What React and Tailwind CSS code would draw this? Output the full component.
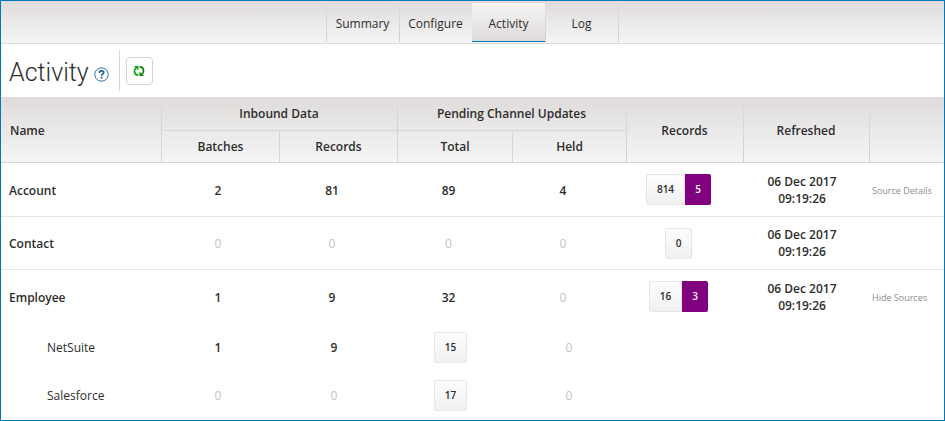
import React from 'react';

const tabs = ['Summary', 'Configure', 'Activity', 'Log'];

const divider =
  'bg-[linear-gradient(to_bottom,#e1dddd,#d0d0d0)] bg-no-repeat bg-[length:1px_100%] bg-left';
const headCell = 'p-0 font-semibold';

const rows = [
  { name: 'Account', batches: 2, records: 81, total: 89, held: 4, count: 814, failed: 5, action: 'Source Details', border: true },
  { name: 'Contact', batches: 0, records: 0, total: 0, held: 0, count: 0, border: true },
  { name: 'Employee', batches: 1, records: 9, total: 32, held: 0, count: 16, failed: 3, action: 'Hide Sources' },
];

const sources = [
  { name: 'NetSuite', batches: 1, records: 9, total: 15, held: 0 },
  { name: 'Salesforce', batches: 0, records: 0, total: 17, held: 0 },
];

function Num({ value }) {
  return value === 0 ? (
    <span className="font-normal text-[#c4c4c4]">0</span>
  ) : (
    <span className="font-semibold">{value}</span>
  );
}

function Badge({ children }) {
  return (
    <button
      type="button"
      className="h-[31px] rounded-[2px] border border-[#e6e6e6] bg-linear-to-b from-[#fdfdfd] to-[#f0f0f0] px-[10px] text-[10px] font-semibold"
    >
      {children}
    </button>
  );
}

function MainRow({ row }) {
  const line = row.border ? 'border-b border-[#e5e5e5]' : '';
  return (
    <tr className="h-[53px] first:h-[54px]">
      <th scope="row" className={`pt-[2px] pb-0 pl-2 text-left font-semibold ${line}`}>{row.name}</th>
      <td className={`pt-[2px] pr-1 pb-0 ${line}`}><Num value={row.batches} /></td>
      <td className={`pt-[2px] pr-3 pb-0 ${line}`}><Num value={row.records} /></td>
      <td className={`pt-[2px] pr-3 pb-0 ${line}`}><Num value={row.total} /></td>
      <td className={`pt-[2px] pr-3 pb-0 ${line}`}><Num value={row.held} /></td>
      <td className={`py-0 pr-3 ${line}`}>
        <div className="flex justify-center">
          <Badge>{row.count}</Badge>
          {row.failed && (
            <button
              type="button"
              className="h-[31px] w-[26px] rounded-r-[2px] bg-[#800080] text-[10px] font-semibold text-white"
            >
              {row.failed}
            </button>
          )}
        </div>
      </td>
      <td className={`py-0 pr-2 leading-[17px] font-semibold ${line}`}>
        06 Dec 2017
        <br />
        09:19:26
      </td>
      <td className={`pt-[2px] pb-0 pl-[3px] text-left text-[9px] whitespace-nowrap text-[#8c8c8c] ${line}`}>
        {row.action && <a href="#sources">{row.action}</a>}
      </td>
    </tr>
  );
}

function SourceRow({ row }) {
  return (
    <tr className="h-12">
      <th scope="row" className="pt-[2px] pb-0 pl-[46px] text-left font-normal">{row.name}</th>
      <td className="pt-[2px] pr-1 pb-0"><Num value={row.batches} /></td>
      <td className="pt-[2px] pr-2 pb-0"><Num value={row.records} /></td>
      <td className="py-0 pr-2">
        <div className="flex justify-center"><Badge>{row.total}</Badge></div>
      </td>
      <td className="p-0 pt-[2px]"><Num value={row.held} /></td>
      <td colSpan={3} />
    </tr>
  );
}

export default function App() {
  return (
    <div className="border border-[#0079b8] bg-white pb-px font-['Open_Sans','Noto_Sans',sans-serif] text-[12px] text-[#2d2d2d]">
      <nav className="flex h-[43px] justify-center border-b border-[#dcdcdc] bg-linear-to-b from-[#dfdbdb] to-[#f5f5f5] pt-[2px]">
        {tabs.map((tab) => (
          <a
            key={tab}
            href={`#${tab.toLowerCase()}`}
            className={
              tab === 'Activity'
                ? 'flex h-[39px] w-[73px] items-center justify-center border-b border-[#0079b8] bg-linear-to-b from-[#f6f4f4] to-[#dfdbdb] pt-[3px]'
                : `flex h-[39px] w-[73px] items-center justify-center pt-[2px] ${divider}`
            }
          >
            {tab}
          </a>
        ))}
        <span className={`h-[39px] w-px ${divider}`} />
      </nav>

      <header className="flex h-[53px] items-center pl-2">
        <h1 className="pt-[5px] font-[Roboto,sans-serif] text-[25px] leading-[30px] font-light">Activity</h1>
        <button type="button" aria-label="Help" className="mt-[7px] ml-[5px]">
          <svg width="15" height="15" viewBox="0 0 15 15" fill="none">
            <circle cx="7.5" cy="7.5" r="6.7" stroke="#2a6fae" strokeWidth="1" />
            <path
              d="M5.3 5.9C5.4 4.5 6.3 3.9 7.5 3.9c1.300 0 2.200.7 2.200 1.800C9.700 7.200 7.600 7 7.600 8.800"
              stroke="#1b5f9f"
              strokeWidth="1.700"
            />
            <rect x="6.700" y="9.700" width="1.800" height="1.800" fill="#1b5f9f" />
          </svg>
        </button>
        <span className="ml-[10px] h-[41px] w-px bg-[#d8d8d8]" />
        <button
          type="button"
          aria-label="Refresh"
          className="ml-1.5 flex h-7 w-[27px] items-center justify-center rounded border border-[#d4d4d4]"
        >
          <svg width="12" height="12" viewBox="0 0 12 12" fill="none">
            <path d="M5.400 10.200H4.600C2.600 9.900 1.500 8.200 1.500 6.200c0-1.600.6-2.700 1.700-3.600" stroke="#12a012" strokeWidth="1.700" />
            <path d="M.9 1h4.600v4.600z" fill="#12a012" />
            <path d="M6.600 1.800h.8c2 .3 3.100 2 3.100 4 0 1.600-.6 2.700-1.700 3.600" stroke="#0b860b" strokeWidth="1.700" />
            <path d="M11.100 11H6.500V6.400z" fill="#0b860b" />
          </svg>
        </button>
      </header>

      <table className="w-full table-fixed border-separate border-spacing-0 text-center">
        <colgroup>
          <col />
          <col className="w-[118px]" />
          <col className="w-[118px]" />
          <col className="w-[115px]" />
          <col className="w-[114px]" />
          <col className="w-[117px]" />
          <col className="w-[126px]" />
          <col className="w-[75px]" />
        </colgroup>
        <thead className="bg-linear-to-b from-[#dfdbdb] to-[#f5f5f5]">
          <tr className="h-[34px]">
            <th rowSpan={2} className="border-b border-[#d6d6d6] pt-[2px] pb-0 pl-[9px] text-left font-semibold">Name</th>
            <th colSpan={2} className={`${headCell} border-b border-[#d6d6d6] ${divider}`}>Inbound Data</th>
            <th colSpan={2} className={`${headCell} border-b border-[#d6d6d6] ${divider}`}>Pending Channel Updates</th>
            <th rowSpan={2} className={`border-b border-[#d6d6d6] px-0 pt-[2px] pb-0 font-semibold ${divider}`}>Records</th>
            <th rowSpan={2} className={`border-b border-[#d6d6d6] px-0 pt-[2px] pb-0 font-semibold ${divider}`}>Refreshed</th>
            <td rowSpan={2} className={`border-b border-[#d6d6d6] ${divider}`} />
          </tr>
          <tr className="h-8">
            <th className={`${headCell} border-b border-l border-[#d6d6d6]`}>Batches</th>
            <th className={`${headCell} border-b border-l border-[#d6d6d6]`}>Records</th>
            <th className={`${headCell} border-b border-l border-[#d6d6d6]`}>Total</th>
            <th className={`${headCell} border-b border-l border-[#d6d6d6]`}>Held</th>
          </tr>
        </thead>
        <tbody>
          {rows.map((row) => (
            <MainRow key={row.name} row={row} />
          ))}
          {sources.map((row) => (
            <SourceRow key={row.name} row={row} />
          ))}
        </tbody>
      </table>
    </div>
  );
}
